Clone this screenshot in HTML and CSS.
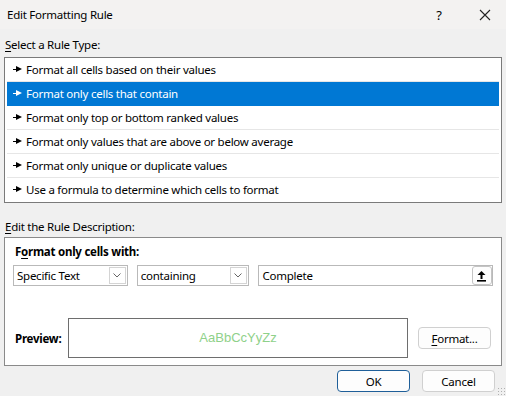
FILE: index.html
```html
<!DOCTYPE html>
<html lang="en">
<head>
  <meta charset="UTF-8">
  <title>Edit Formatting Rule</title>
  <link rel="stylesheet" href="styles.css">
</head>
<body>
  <div class="dialog">
    <!-- title bar -->
    <div class="titlebar">
      <span class="title">Edit Formatting Rule</span>
      <span class="help">?</span>
      <span class="close">
        <svg width="12" height="12" viewBox="0 0 12 12"><path d="M1 1L11 11M11 1L1 11" stroke="#222" stroke-width="1.1" fill="none"/></svg>
      </span>
    </div>

    <div class="content">
      <div class="label"><u>S</u>elect a Rule Type:</div>
      <ul class="rule-list">
        <li><span class="arrow"></span>Format all cells based on their values</li>
        <li class="selected"><span class="arrow"></span>Format only cells that contain</li>
        <li><span class="arrow"></span>Format only top or bottom ranked values</li>
        <li><span class="arrow"></span>Format only values that are above or below average</li>
        <li><span class="arrow"></span>Format only unique or duplicate values</li>
        <li><span class="arrow"></span>Use a formula to determine which cells to format</li>
      </ul>

      <div class="label label-desc"><u>E</u>dit the Rule Description:</div>
      <div class="desc-box">
        <div class="desc-title">F<u>o</u>rmat only cells with:</div>
        <div class="criteria">
          <div class="combo combo-type">
            <span class="combo-text">Specific Text</span>
            <span class="drop"><svg width="8" height="5" viewBox="0 0 8 5"><path d="M0.5 0.5L4 4L7.5 0.5" stroke="#666" fill="none"/></svg></span>
          </div>
          <div class="combo combo-op">
            <span class="combo-text">containing</span>
            <span class="drop"><svg width="8" height="5" viewBox="0 0 8 5"><path d="M0.5 0.5L4 4L7.5 0.5" stroke="#666" fill="none"/></svg></span>
          </div>
          <div class="combo combo-value">
            <span class="combo-text">Complete</span>
            <span class="ref-btn">
              <svg width="11" height="12" viewBox="0 0 11 12"><path d="M5.5 1L1.5 5H4.5V9H6.5V5H9.5Z" fill="#000"/><rect x="1" y="10" width="9" height="1.6" fill="#000"/></svg>
            </span>
          </div>
        </div>
        <div class="preview-row">
          <span class="preview-label">Preview:</span>
          <div class="preview-box">AaBbCcYyZz</div>
          <button class="btn"><u>F</u>ormat...</button>
        </div>
      </div>

      <div class="actions">
        <button class="btn btn-default">OK</button>
        <button class="btn">Cancel</button>
      </div>
    </div>
    <span class="grip"></span>
  </div>
</body>
</html>
```

FILE: styles.css
```css
body {
  margin: 0;
  font-family: "Noto Sans", "Open Sans", sans-serif;
  font-size: 11.5px;
  letter-spacing: -0.25px;
  color: #000;
  background-color: #f0f0f0;
}
u {
  text-decoration-thickness: 1px;
  text-underline-offset: 2px;
}
.dialog {
  position: relative;
  width: 506px;
  height: 396px;
  background-color: #f0f0f0;
  overflow: hidden;
}
.titlebar {
  display: flex;
  align-items: center;
  height: 29px;
  padding-left: 7px;
  background-color: #f3f2f1;
}
.title {
  flex: 1;
}
.help {
  width: 46px;
  margin-right: 2px;
  text-align: center;
  font-size: 13px;
}
.close {
  display: flex;
  justify-content: center;
  width: 42px;
}
.content {
  padding: 0 4px;
}
.label {
  height: 16px;
  line-height: 16px;
  margin-top: 8px;
  padding-left: 1px;
}
.rule-list {
  list-style: none;
  margin: 4px 0 0 0;
  padding: 0 2px 0 2px;
  width: 492px;
  background-color: #fff;
  border: 1px solid #7a7a7a;
}
.rule-list li {
  display: flex;
  align-items: center;
  height: 23px;
  border-bottom: 1px solid #e6e6e6;
  padding-left: 6px;
}
.rule-list li:last-child {
  border-bottom-color: #fff;
}
.rule-list li.selected {
  background-color: #0078d4;
  color: #fff;
  border-bottom-color: #0078d4;
}
.arrow {
  position: relative;
  width: 9px;
  height: 7px;
  margin-right: 4px;
}
.arrow::before {
  content: "";
  position: absolute;
  left: 0;
  top: 3px;
  width: 4px;
  height: 1px;
  background-color: currentColor;
}
.arrow::after {
  content: "";
  position: absolute;
  left: 3px;
  top: 0;
  border-left: 6px solid currentColor;
  border-top: 3.5px solid transparent;
  border-bottom: 3.5px solid transparent;
}
.label-desc {
  margin-top: 16px;
}
.desc-box {
  margin-top: 2px;
  width: 480px;
  height: 121px;
  padding: 6px 8px 0 8px;
  background-color: #fff;
  border: 1px solid #8a8a8a;
}
.desc-title {
  font-weight: bold;
  height: 16px;
  line-height: 16px;
  padding-left: 2px;
}
.criteria {
  display: flex;
  gap: 9px;
  margin-top: 5px;
}
.combo {
  display: flex;
  align-items: center;
  height: 19px;
  border: 1px solid #b9b9b9;
  background-color: #fff;
  padding-left: 3px;
}
.combo-type {
  width: 111px;
}
.combo-op {
  width: 108px;
}
.combo-value {
  width: 232px;
  padding-left: 4px;
}
.combo-text {
  flex: 1;
}
.drop {
  display: flex;
  align-items: center;
  justify-content: center;
  width: 15px;
  height: 15px;
  margin-right: 1px;
  border: 1px solid #d4d4d4;
}
.ref-btn {
  display: flex;
  align-items: center;
  justify-content: center;
  width: 18px;
  height: 17px;
  margin-right: 0;
  border: 1px solid #c4c4c4;
  border-radius: 3px;
  background-color: #fdfdfd;
}
.preview-row {
  display: flex;
  align-items: center;
  margin-top: 32px;
}
.preview-label {
  font-weight: bold;
  width: 53px;
  padding-left: 2px;
}
.preview-box {
  width: 338px;
  height: 38px;
  line-height: 38px;
  border: 1px solid #6e6e6e;
  text-align: center;
  color: #8fd18a;
  font-family: "Liberation Sans", Arial, sans-serif;
  font-size: 13px;
  letter-spacing: 0;
}
.btn {
  width: 73px;
  height: 22px;
  padding: 0;
  font-family: inherit;
  font-size: inherit;
  letter-spacing: inherit;
  color: #000;
  background-color: #fdfdfd;
  border: 1px solid #d0d0d0;
  border-radius: 4px;
}
.preview-row .btn {
  margin-left: 10px;
}
.actions {
  display: flex;
  justify-content: flex-end;
  gap: 12px;
  margin-top: 4px;
  padding-right: 7px;
}
.btn-default {
  border-color: #1f5f99;
}
.grip {
  position: absolute;
  right: 1px;
  bottom: 1px;
  width: 8px;
  height: 8px;
  background-image: radial-gradient(circle, #b0b0b0 0.8px, transparent 1px);
  background-size: 3px 3px;
}
```
